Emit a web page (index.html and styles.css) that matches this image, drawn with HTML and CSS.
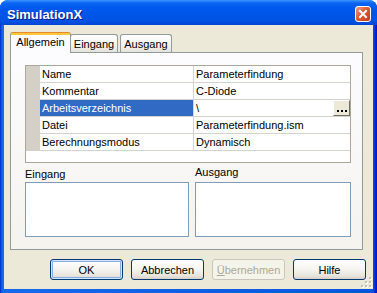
FILE: index.html
```html
<!DOCTYPE html>
<html lang="de">
<head>
  <meta charset="UTF-8">
  <title>SimulationX</title>
  <link rel="stylesheet" href="styles.css">
</head>
<body>
  <div class="window">
    <div class="titlebar">
      <span class="title">SimulationX</span>
      <span class="close">
        <svg width="16" height="16" viewBox="0 0 16 16">
          <defs>
            <linearGradient id="cg" x1="0" y1="0" x2="1" y2="1">
              <stop offset="0" stop-color="#F0A58C"/>
              <stop offset="0.45" stop-color="#DD5B36"/>
              <stop offset="1" stop-color="#BE3A17"/>
            </linearGradient>
          </defs>
          <rect x="0.5" y="0.5" width="15" height="15" rx="2.5" fill="url(#cg)" stroke="#fff"/>
          <path d="M5 5 L11 11 M11 5 L5 11" stroke="#fff" stroke-width="2" stroke-linecap="square"/>
        </svg>
      </span>
    </div>

    <div class="client">
      <div class="tabs">
        <div class="tab active">Allgemein</div>
        <div class="tab tab-in">Eingang</div>
        <div class="tab tab-out">Ausgang</div>
      </div>

      <div class="panel">
        <div class="grid">
          <div class="row">
            <div class="gutter"></div>
            <div class="cell name">Name</div>
            <div class="cell value">Parameterfindung</div>
          </div>
          <div class="row">
            <div class="gutter"></div>
            <div class="cell name">Kommentar</div>
            <div class="cell value">C-Diode</div>
          </div>
          <div class="row selected">
            <div class="gutter"></div>
            <div class="cell name">Arbeitsverzeichnis</div>
            <div class="cell value">\
              <span class="browse">
                <svg width="15" height="14" viewBox="0 0 15 14">
                  <rect x="3" y="9" width="2" height="2" fill="#000"/>
                  <rect x="7" y="9" width="2" height="2" fill="#000"/>
                  <rect x="11" y="9" width="2" height="2" fill="#000"/>
                </svg>
              </span>
            </div>
          </div>
          <div class="row">
            <div class="gutter"></div>
            <div class="cell name">Datei</div>
            <div class="cell value">Parameterfindung.ism</div>
          </div>
          <div class="row">
            <div class="gutter"></div>
            <div class="cell name">Berechnungsmodus</div>
            <div class="cell value">Dynamisch</div>
          </div>
        </div>

        <div class="lists">
          <div class="list-col list-in">
            <div class="list-label">Eingang</div>
            <div class="listbox"></div>
          </div>
          <div class="list-col list-out">
            <div class="list-label">Ausgang</div>
            <div class="listbox"></div>
          </div>
        </div>
      </div>

      <div class="buttons">
        <button class="btn default">OK</button>
        <button class="btn">Abbrechen</button>
        <button class="btn" disabled><u>Ü</u>bernehmen</button>
        <button class="btn">Hilfe</button>
      </div>

      <svg class="grip" width="12" height="12" viewBox="0 0 12 12">
        <g fill="#fff">
          <rect x="10" y="2" width="2" height="2"/>
          <rect x="6" y="6" width="2" height="2"/><rect x="10" y="6" width="2" height="2"/>
          <rect x="2" y="10" width="2" height="2"/><rect x="6" y="10" width="2" height="2"/><rect x="10" y="10" width="2" height="2"/>
        </g>
        <g fill="#C5C2B2">
          <rect x="9" y="1" width="2" height="2"/>
          <rect x="5" y="5" width="2" height="2"/><rect x="9" y="5" width="2" height="2"/>
          <rect x="1" y="9" width="2" height="2"/><rect x="5" y="9" width="2" height="2"/><rect x="9" y="9" width="2" height="2"/>
        </g>
      </svg>
    </div>
  </div>
</body>
</html>
```

FILE: styles.css
```css
/* Dialog window, XP look */
body {
  margin: 0;
  background: #ffffff;
  font-family: "Liberation Sans", Arial, sans-serif;
  font-size: 11px;
  color: #000000;
}

.window {
  width: 377px;
  height: 293px;
  display: flex;
  flex-direction: column;
  background: linear-gradient(to right, #0019CF 0, #0855DD 1px, #166AEE 3px, #0855DD 373px, #0019CF 376px);
  border-radius: 8px 8px 0 0;
  overflow: hidden;
}

/* Title bar */
.titlebar {
  height: 25px;
  display: flex;
  align-items: flex-start;
  background: linear-gradient(#3D95FF 0, #0A66F2 3px, #0058EE 8px, #0055E5 16px, #0052E3 21px, #0046D4 25px);
}

.title {
  margin: 4px 0 0 7px;
  line-height: 21px;
  font-size: 13px;
  font-weight: bold;
  color: #ffffff;
  text-shadow: 1px 1px #0A1883;
}

.close {
  margin: 6px 6px 0 auto;
  width: 16px;
  height: 16px;
}

.close svg {
  display: block;
}

/* Client area */
.client {
  position: relative;
  flex: 1;
  margin: 0 4px 4px;
  padding-top: 7px;
  background: #ECE9D8;
}

/* Tabs */
.tabs {
  position: relative;
  z-index: 1;
  display: flex;
  align-items: flex-end;
  height: 20px;
  margin-left: 6px;
}

.tab {
  box-sizing: border-box;
  height: 18px;
  padding-top: 1px;
  line-height: 17px;
  text-align: center;
  border: 1px solid #919B9C;
  border-bottom: none;
  border-radius: 3px 3px 0 0;
  background: linear-gradient(#FFFFFF, #F3F3EF 60%, #E4E2DA);
}

.tab.active {
  position: relative;
  z-index: 2;
  width: 61px;
  height: 21px;
  margin-bottom: -1px;
  padding-top: 2px;
  border-top: none;
  background: linear-gradient(#E68B2C 0, #E68B2C 1px, #FFC83C 1px, #FFC83C 3px, #FCFCFE 3px);
}

.tab-in {
  width: 48px;
  margin-left: -1px;
}

.tab-out {
  width: 52px;
  margin-left: 2px;
}

/* Tab page */
.panel {
  box-sizing: border-box;
  width: 353px;
  height: 198px;
  margin-left: 6px;
  border: 1px solid #919B9C;
  background: linear-gradient(#FCFCFE, #F4F3EE);
}

/* Property grid */
.grid {
  box-sizing: border-box;
  width: 326px;
  height: 98px;
  margin: 12px 0 0 14px;
  border: 1px solid #ACA899;
  background: #ffffff;
}

.row {
  display: grid;
  grid-template-columns: 14px 154px 156px;
  height: 17px;
}

.gutter {
  background: #D4D0C8;
}

.cell {
  box-sizing: border-box;
  height: 17px;
  padding-left: 2px;
  line-height: 16px;
  border-bottom: 1px solid #D6D3CC;
  white-space: nowrap;
}

.name {
  border-right: 1px solid #D6D3CC;
}

.value {
  position: relative;
}

.selected .name {
  background: #316AC5;
  color: #ffffff;
}

.browse {
  position: absolute;
  top: 0;
  right: 0;
  box-sizing: border-box;
  width: 17px;
  height: 16px;
  border: 1px solid;
  border-color: #ffffff #716F64 #716F64 #ffffff;
  background: #ECE9D8;
}

.browse svg {
  display: block;
}

/* Eingang / Ausgang lists */
.lists {
  display: flex;
  margin-left: 14px;
}

.list-in {
  width: 164px;
}

.list-out {
  width: 156px;
  margin-left: 6px;
}

.list-label {
  height: 19px;
  box-sizing: border-box;
  line-height: 13px;
}

.list-in .list-label {
  padding-top: 5px;
}

.list-out .list-label {
  padding-top: 3px;
}

.listbox {
  box-sizing: border-box;
  height: 55px;
  border: 1px solid #7F9DB9;
  background: #ffffff;
}

/* Dialog buttons */
.buttons {
  display: flex;
  gap: 8px;
  margin: 9px 0 0 46px;
}

.btn {
  box-sizing: border-box;
  width: 73px;
  height: 21px;
  padding: 0;
  font-family: "Liberation Sans", Arial, sans-serif;
  font-size: 11px;
  color: #000000;
  border: 1px solid #003C74;
  border-radius: 3px;
  background: linear-gradient(#FFFFFF, #F5F4F0 50%, #E6E3DA 85%, #D6D0C5);
}

.btn.default {
  box-shadow: inset 0 0 0 1px #CEE7FF, inset 0 0 0 2px #89ADE4;
}

.btn:disabled {
  color: #ACA899;
  border-color: #C9C7BA;
  background: #F5F4EA;
}

.grip {
  position: absolute;
  right: 1px;
  bottom: 1px;
}
```
